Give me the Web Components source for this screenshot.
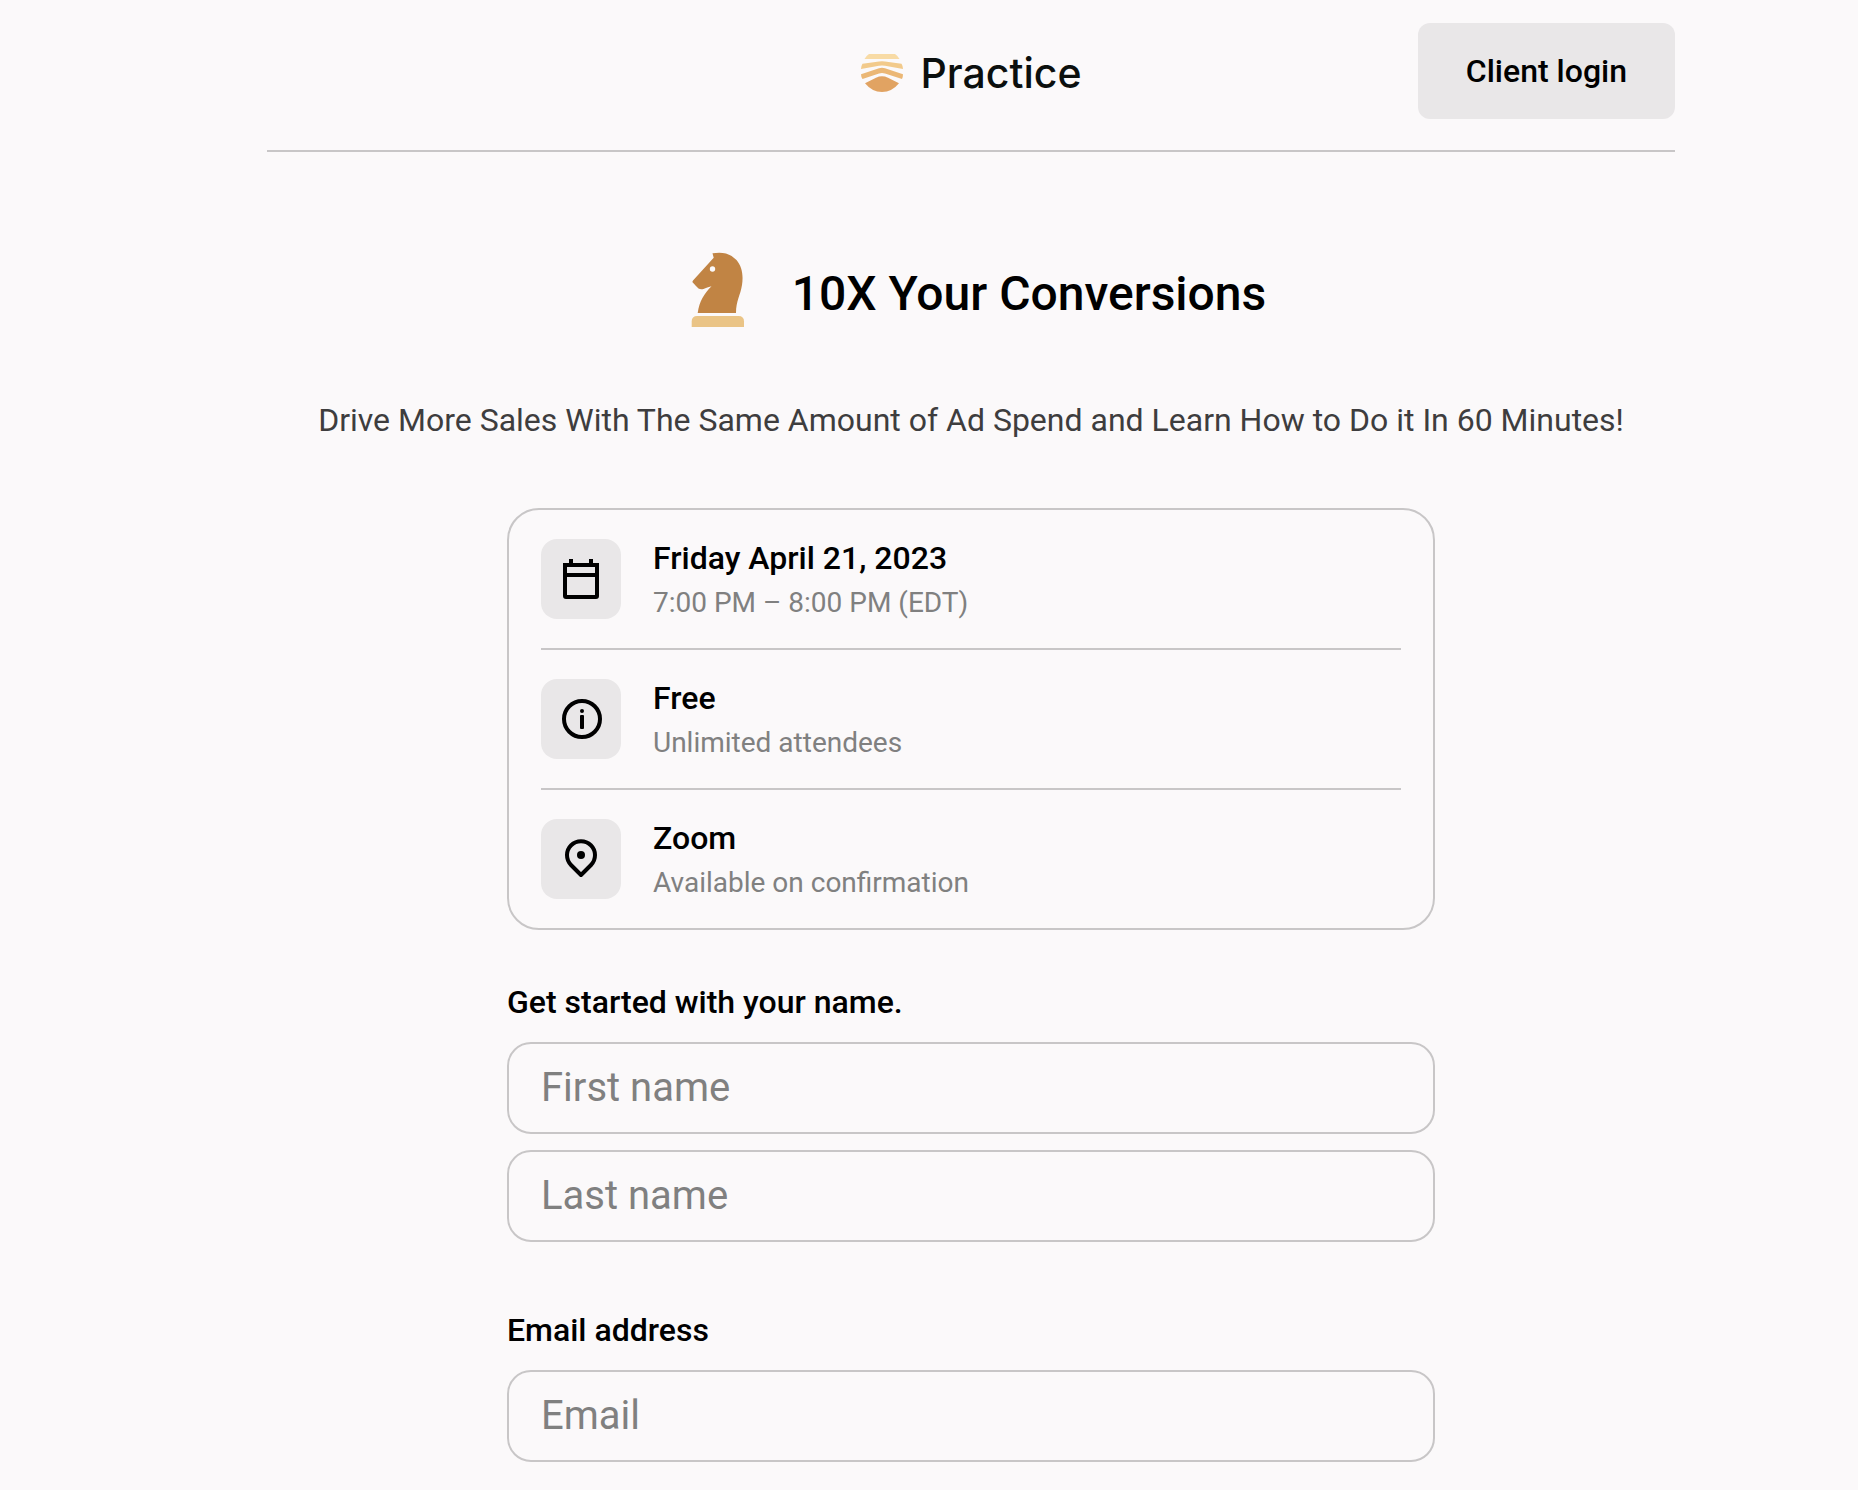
<!DOCTYPE html>
<html lang="en">
<head>
<meta charset="utf-8">
<meta name="viewport" content="width=device-width, initial-scale=1">
<title>10X Your Conversions</title>
<style>
  body {
    margin: 0;
    background: #fbf9fa;
    color: #000;
    font-family: Roboto, "Liberation Sans", sans-serif;
    --line: #c8c6c7;
    --fill: #e9e7e8;
    --muted: #808080;
  }
</style>
</head>
<body>
<booking-page>
  <site-header slot="header"></site-header>
  <event-title slot="intro">
    10X Your Conversions
    <span slot="description">Drive More Sales With The Same Amount of Ad Spend and Learn How to Do it In 60 Minutes!</span>
  </event-title>
  <event-details>
    <detail-row icon="calendar">Friday April 21, 2023<span slot="note">7:00 PM – 8:00 PM (EDT)</span></detail-row>
    <detail-row icon="info">Free<span slot="note">Unlimited attendees</span></detail-row>
    <detail-row icon="pin">Zoom<span slot="note">Available on confirmation</span></detail-row>
  </event-details>
  <field-group label="Get started with your name." fields="First name,Last name"></field-group>
  <field-group label="Email address" fields="Email" type="email"></field-group>
</booking-page>

<script>
const icons = {
  calendar: `
    <path d="M12 4h4v6h-4zM32 4h4v6h-4z"/>
    <path fill-rule="evenodd" d="M6 8h36v33a3 3 0 0 1-3 3H9a3 3 0 0 1-3-3zM10 12v6h28v-6zM10 22v18h28V22z"/>`,
  info: `
    <circle cx="25" cy="24" r="18" fill="none" stroke="#000" stroke-width="4"/>
    <circle cx="25" cy="16" r="2"/>
    <rect x="23" y="20" width="4" height="14" rx="1"/>`,
  pin: `
    <path d="M24 40L14 30A14 14 0 1 1 34 30Z" fill="none" stroke="#000" stroke-width="4" stroke-linejoin="round"/>
    <circle cx="24" cy="20" r="4"/>`,
};

class BookingPage extends HTMLElement {
  constructor() {
    super();
    this.attachShadow({ mode: "open" }).innerHTML = `
      <style>
        :host {
          display: block;
          padding: 0 0 28px 84px;
        }
        .page {
          max-width: 1408px;
          margin: 0 auto;
        }
        main {
          display: flex;
          flex-direction: column;
          align-items: center;
        }
        form {
          width: 100%;
          max-width: 928px;
          margin-top: 68px;
        }
      </style>
      <div class="page">
        <slot name="header"></slot>
        <main>
          <slot name="intro"></slot>
          <form><slot></slot></form>
        </main>
      </div>
    `;
  }
}

class SiteHeader extends HTMLElement {
  constructor() {
    super();
    this.attachShadow({ mode: "open" }).innerHTML = `
      <style>
        :host {
          display: block;
        }
        header {
          display: grid;
          grid-template-columns: 1fr auto 1fr;
          align-items: center;
          padding: 23px 0 31px;
          border-bottom: 2px solid var(--line);
        }
        a {
          grid-column: 2;
          display: flex;
          align-items: center;
          gap: 18px;
          padding-top: 3px;
          color: #0b0f0e;
          font: 500 41px/48px Inter, sans-serif;
          text-decoration: none;
        }
        button {
          justify-self: end;
          padding: 28px 48px;
          border: 0;
          border-radius: 12px;
          background: var(--fill);
          color: #000;
          font: 500 32px/40px Roboto, sans-serif;
          cursor: pointer;
        }
      </style>
      <header>
        <a href="#">
          <svg width="42" height="38" viewBox="0 0 42 38" aria-hidden="true">
            <path fill="#f8dba5" d="M8 0H34Q37 2 38.500 5H3.500Q5 2 8 0Z"/>
            <path fill="#f2ca8b" d="M1.500 9.700L18 7.500Q21 7 24 7.500L40.500 9.700Q42 12 42 15L24 11.800Q21 11.300 18 11.800L0 15Q0 12 1.500 9.700Z"/>
            <path fill="#ebb775" d="M0 20.300L18 14.300Q21 13.300 24 14.300L42 20.300Q42 23 41 25L24 19.500Q21 18.500 18 19.500L1.500 25Q0 23 0 20.300Z"/>
            <path fill="#e1a362" d="M4 29.300L15 23.700Q21 21 27 23.700L38 29.300Q31 38 21 38T4 29.300Z"/>
          </svg>
          Practice
        </a>
        <button type="button">Client login</button>
      </header>
    `;
  }
}

class EventTitle extends HTMLElement {
  constructor() {
    super();
    this.attachShadow({ mode: "open" }).innerHTML = `
      <style>
        :host {
          display: block;
          margin-top: 98px;
          text-align: center;
        }
        .title {
          display: flex;
          align-items: center;
          justify-content: center;
          gap: 36px;
        }
        svg {
          flex: none;
        }
        h1 {
          margin: 0;
          font-size: 48px;
          font-weight: 500;
          line-height: 56px;
        }
        p {
          margin: 62px 0 0;
          color: #3e3d3e;
          font-size: 32px;
          line-height: 40px;
        }
      </style>
      <div class="title">
        <svg width="80" height="88" viewBox="0 0 80 88" aria-hidden="true">
          <path fill="#c18444" d="M36.500 3.300Q52 .500 60.500 10C66 16.500 67.500 25 66 35C64.500 45 60 51 60 63H21.700C23.500 51 28 44 35.500 36.300Q31 37.500 27.500 39Q24.500 39.700 22.500 38.500L19.500 35.500Q18 33.500 16.300 32L17 30.500L37.700 7.800Z"/>
          <circle cx="36.500" cy="19" r="2.700" fill="#fbf9fa"/>
          <path fill="#eac486" d="M15.700 77V71.500Q15.700 66 21.200 66H62.500Q68 66 68 71.500V77Z"/>
        </svg>
        <h1><slot></slot></h1>
      </div>
      <p><slot name="description"></slot></p>
    `;
  }
}

class EventDetails extends HTMLElement {
  constructor() {
    super();
    this.attachShadow({ mode: "open" }).innerHTML = `
      <style>
        :host {
          display: block;
          padding: 0 32px;
          border: 2px solid var(--line);
          border-radius: 32px;
        }
        ::slotted(:not(:last-child)) {
          border-bottom: 2px solid var(--line);
        }
      </style>
      <slot></slot>
    `;
  }
}

class DetailRow extends HTMLElement {
  connectedCallback() {
    if (this.shadowRoot) return;
    this.attachShadow({ mode: "open" }).innerHTML = `
      <style>
        :host {
          display: flex;
          align-items: center;
          gap: 32px;
          padding: 28px 0;
        }
        .icon {
          display: grid;
          place-items: center;
          flex: none;
          width: 80px;
          height: 80px;
          border-radius: 16px;
          background: var(--fill);
        }
        .text {
          display: flex;
          flex-direction: column;
          gap: 8px;
        }
        .name {
          font-size: 32px;
          font-weight: 500;
          line-height: 40px;
        }
        .note {
          color: var(--muted);
          font-size: 28px;
          line-height: 34px;
        }
      </style>
      <div class="icon">
        <svg width="48" height="48" viewBox="0 0 48 48" aria-hidden="true">${icons[this.getAttribute("icon")]}</svg>
      </div>
      <div class="text">
        <div class="name"><slot></slot></div>
        <div class="note"><slot name="note"></slot></div>
      </div>
    `;
  }
}

class FieldGroup extends HTMLElement {
  connectedCallback() {
    if (this.shadowRoot) return;
    const type = this.getAttribute("type") || "text";
    const fields = this.getAttribute("fields").split(",");
    this.attachShadow({ mode: "open" }).innerHTML = `
      <style>
        :host {
          display: block;
          margin-top: 52px;
        }
        :host(:last-child) {
          margin-top: 68px;
        }
        label {
          display: block;
          margin-bottom: 20px;
          font-size: 32px;
          font-weight: 500;
          line-height: 40px;
        }
        .fields {
          display: grid;
          gap: 16px;
        }
        input {
          box-sizing: border-box;
          width: 100%;
          padding: 20px 32px;
          border: 2px solid var(--line);
          border-radius: 24px;
          background: transparent;
          color: #000;
          font: 400 40px/48px Roboto, sans-serif;
        }
        input::placeholder {
          color: var(--muted);
          opacity: 1;
        }
      </style>
      <label for="field-0">${this.getAttribute("label")}</label>
      <div class="fields">
        ${fields
          .map((name, i) => `<input id="field-${i}" type="${type}" placeholder="${name}" aria-label="${name}">`)
          .join("")}
      </div>
    `;
  }
}

customElements.define("booking-page", BookingPage);
customElements.define("site-header", SiteHeader);
customElements.define("event-title", EventTitle);
customElements.define("event-details", EventDetails);
customElements.define("detail-row", DetailRow);
customElements.define("field-group", FieldGroup);
</script>
</body>
</html>
